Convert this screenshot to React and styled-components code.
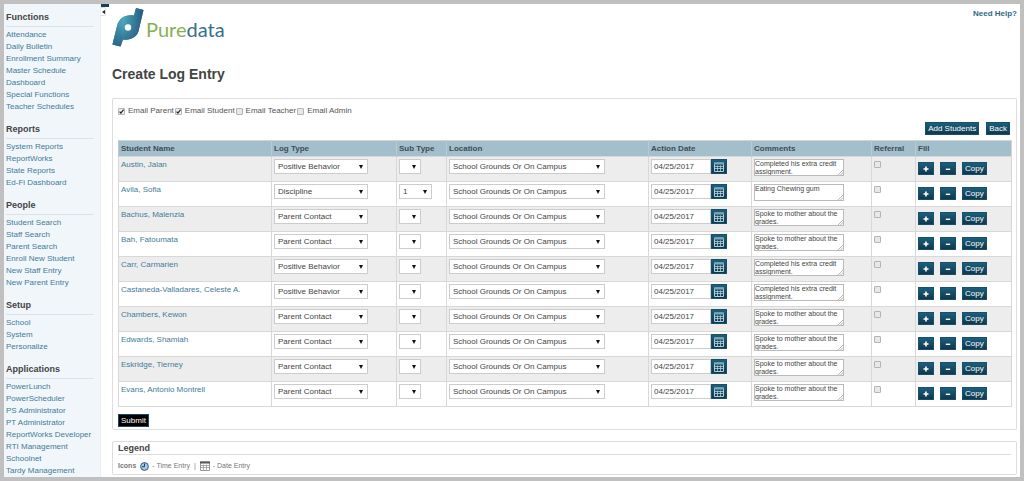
import { useState } from "react";
import styled, { createGlobalStyle } from "styled-components";

const GlobalStyle = createGlobalStyle`
  *, *::before, *::after {
    box-sizing: border-box;
  }

  body {
    margin: 0;
    font-family: "Liberation Sans", Arial, sans-serif;
    font-size: 8px;
    line-height: 12px;
    color: #555;
    background: #c0c0c0;
  }

  button, input, select, textarea {
    margin: 0;
    font-family: inherit;
    font-size: 8px;
    color: #444;
  }
`;

const menu = [
  {
    title: "Functions",
    links: ["Attendance", "Daily Bulletin", "Enrollment Summary", "Master Schedule", "Dashboard", "Special Functions", "Teacher Schedules"],
  },
  {
    title: "Reports",
    links: ["System Reports", "ReportWorks", "State Reports", "Ed-Fi Dashboard"],
  },
  {
    title: "People",
    links: ["Student Search", "Staff Search", "Parent Search", "Enroll New Student", "New Staff Entry", "New Parent Entry"],
  },
  {
    title: "Setup",
    links: ["School", "System", "Personalize"],
  },
  {
    title: "Applications",
    links: ["PowerLunch", "PowerScheduler", "PS Administrator", "PT Administrator", "ReportWorks Developer", "RTI Management", "Schoolnet", "Tardy Management"],
  },
];

const EXTRA_CREDIT = "Completed his extra credit assignment.";
const GRADES = "Spoke to mother about the grades.";

const entries = [
  { name: "Austin, Jalan", type: "Positive Behavior", sub: "", comment: EXTRA_CREDIT },
  { name: "Avila, Sofia", type: "Discipline", sub: "1", comment: "Eating Chewing gum" },
  { name: "Bachus, Malenzia", type: "Parent Contact", sub: "", comment: GRADES },
  { name: "Bah, Fatoumata", type: "Parent Contact", sub: "", comment: GRADES },
  { name: "Carr, Carmarien", type: "Positive Behavior", sub: "", comment: EXTRA_CREDIT },
  { name: "Castaneda-Valladares, Celeste A.", type: "Positive Behavior", sub: "", comment: EXTRA_CREDIT },
  { name: "Chambers, Kewon", type: "Parent Contact", sub: "", comment: GRADES },
  { name: "Edwards, Shamiah", type: "Parent Contact", sub: "", comment: GRADES },
  { name: "Eskridge, Tierney", type: "Parent Contact", sub: "", comment: GRADES },
  { name: "Evans, Antonio Montrell", type: "Parent Contact", sub: "", comment: GRADES },
];

const columns = [
  { label: "Student Name", width: 153 },
  { label: "Log Type", width: 125 },
  { label: "Sub Type", width: 50 },
  { label: "Location", width: 202 },
  { label: "Action Date", width: 103 },
  { label: "Comments", width: 120 },
  { label: "Referral", width: 44 },
  { label: "Fill", width: 96 },
];

const recipients = [
  { label: "Email Parent", checked: true },
  { label: "Email Student", checked: true },
  { label: "Email Teacher", checked: false },
  { label: "Email Admin", checked: false },
];

const Frame = styled.div`
  display: flex;
  min-height: 100vh;
  border: 4px solid #c0c0c0;
  background: #fff;
`;

const Sidebar = styled.nav`
  flex: 0 0 97px;
  padding: 4px 6px 0 2px;
  background: #f1f6fa;
  border-right: 1px solid #e9eef2;
`;

const MenuSection = styled.section`
  & + & {
    margin-top: 7px;
  }
`;

const MenuTitle = styled.h2`
  margin: 0;
  font-size: 9px;
  line-height: 18px;
  color: #444;
  border-bottom: 1px solid #dbe2e8;
`;

const MenuList = styled.ul`
  margin: 0;
  padding: 2px 0 0;
  list-style: none;
`;

const Link = styled.a`
  color: #437b97;
  text-decoration: none;
  white-space: nowrap;
`;

const Collapse = styled.div`
  align-self: flex-start;
  flex: 0 0 8px;
  width: 8px;
  border-top: 3px solid #14425a;
`;

const CollapseButton = styled.button`
  display: flex;
  align-items: center;
  justify-content: center;
  width: 5px;
  height: 9px;
  padding: 0;
  border: 1px solid #ddd;
  border-left: 0;
  border-radius: 0 2px 2px 0;
  background: #fff;
`;

const Main = styled.main`
  flex: 1;
  min-width: 0;
  padding: 4px 3px 2px;
`;

const Header = styled.header`
  display: flex;
  justify-content: space-between;
  align-items: flex-start;
  height: 40px;
`;

const Brand = styled.div`
  display: flex;
  align-items: flex-start;
  gap: 1px;
`;

const BrandName = styled.span`
  font-family: Lato, "Open Sans", sans-serif;
  font-size: 20px;
  line-height: 42px;
  color: #86b052;

  span {
    color: #35708c;
  }
`;

const HelpLink = styled(Link)`
  font-weight: bold;
  color: #2f6885;
`;

const Title = styled.h1`
  margin: 18px 0 15px;
  font-size: 14px;
  line-height: 17px;
  color: #444;
`;

const Panel = styled.section`
  border: 1px solid #ddd;
  border-radius: 2px;
  padding: 0 5px;
`;

const EntryPanel = styled(Panel)`
  padding-bottom: 2px;
`;

const LegendPanel = styled(Panel)`
  margin-top: 11px;
`;

const Recipients = styled.div`
  display: flex;
  gap: 1px;
  padding-top: 6px;
`;

const CheckLabel = styled.label`
  display: flex;
  align-items: center;
  gap: 3px;
`;

const Check = styled.input.attrs({ type: "checkbox" })`
  appearance: none;
  display: block;
  width: 7px;
  height: 7px;
  border: 1px solid #b4b4b4;
  border-radius: 1px;
  background: #e8e8e8;

  &:checked {
    background: #eee url("data:image/svg+xml,%3Csvg xmlns='http://www.w3.org/2000/svg' viewBox='0 0 5 5'%3E%3Cpath d='M.6 2.6l1.3 1.5L4.6.6' fill='none' stroke='%23222' stroke-width='1.2'/%3E%3C/svg%3E");
  }
`;

const Actions = styled.div`
  display: flex;
  justify-content: flex-end;
  gap: 7px;
  padding: 5px 1px 5px 0;
`;

const Button = styled.button`
  display: flex;
  align-items: center;
  justify-content: center;
  width: ${(props) => (props.$square ? "16px" : "auto")};
  height: 13px;
  padding: ${(props) => (props.$square ? "0" : "0 2px")};
  border: 1px solid ${(props) => (props.$dark ? "#1b4a60" : "#17506a")};
  background: ${(props) => (props.$dark ? "#000" : "linear-gradient(#1c5f7c, #10384d)")};
  color: #fff;
  line-height: 11px;
  white-space: nowrap;
`;

const SubmitRow = styled.div`
  display: flex;
  padding-top: 7px;
`;

const Table = styled.table`
  width: 100%;
  table-layout: fixed;
  border-collapse: collapse;
  border: 1px solid #d5d5d5;
`;

const HeadCell = styled.th`
  height: 16px;
  padding: 0 2px;
  text-align: left;
  color: #3f4d55;
  background: #a3bfcc;
  border-left: 1px solid #b7cbd5;
`;

const Row = styled.tr`
  height: 25px;
  background: #fff;

  &:nth-child(odd) {
    background: #ededed;
  }
`;

const Cell = styled.td`
  padding: ${(props) => props.$top || 2}px 2px 0;
  vertical-align: top;
  line-height: 12px;
  border: 1px solid #d8d8d8;
`;

const SelectBox = styled.div`
  display: inline-grid;
  align-items: center;
  vertical-align: top;
  width: ${(props) => props.$width}px;

  > * {
    grid-area: 1 / 1;
  }

  svg {
    justify-self: end;
    margin-right: 5px;
    pointer-events: none;
  }
`;

const Select = styled.select`
  appearance: none;
  width: 100%;
  height: 15px;
  padding: 0 3px;
  border: 1px solid #ccc;
  border-radius: 0;
  background: #fff;
`;

const DateField = styled.div`
  display: flex;
`;

const DateInput = styled.input`
  width: 60px;
  height: 15px;
  padding: 0 2px;
  border: 1px solid #ccc;
`;

const CalendarButton = styled.button`
  display: flex;
  align-items: center;
  justify-content: center;
  width: 16px;
  height: 15px;
  padding: 0;
  border: 1px solid #17506a;
  background: linear-gradient(#1c5f7c, #10384d);
`;

const Comment = styled.textarea`
  display: block;
  width: 90px;
  height: 17px;
  padding: 0;
  border: 1px solid #bbb;
  font-size: 7px;
  line-height: 8px;
  overflow: hidden;
  resize: none;
`;

const CommentBox = styled.div`
  display: inline-grid;
  vertical-align: top;

  > * {
    grid-area: 1 / 1;
  }

  svg {
    place-self: end;
    margin: 1px;
    pointer-events: none;
  }
`;

const FillButtons = styled.div`
  display: flex;
  gap: 6px;
`;

const LegendTitle = styled.h2`
  margin: 0;
  font-size: 9px;
  line-height: 12px;
  color: #444;
  border-bottom: 1px solid #ddd;
`;

const LegendLine = styled.p`
  display: flex;
  align-items: center;
  gap: 3px;
  margin: 0;
  padding: 5px 0 2px;
  font-size: 7px;
  color: #777;

  svg {
    margin-left: 1px;
  }
`;

const LogoMark = () => (
  <svg width="33" height="40" viewBox="0 0 33 40" aria-hidden="true">
    <defs>
      <linearGradient id="mark" x1="0" y1="0" x2="1" y2="0">
        <stop offset="0" stopColor="#3b8ba6" />
        <stop offset=".35" stopColor="#4ba6ba" />
        <stop offset="1" stopColor="#25597b" />
      </linearGradient>
      <linearGradient id="foot" x1="0" y1="0" x2="0" y2="1">
        <stop offset=".4" stopColor="#2a6588" stopOpacity="0" />
        <stop offset="1" stopColor="#2a6588" />
      </linearGradient>
    </defs>
    <path id="pd" d="M24 0l7.500 2-5 21c-1.500 6-8 9.500-15.500 8.500l-2.500 7L.5 36.500 5 18C7 10 13.500 6 22 7.500z" fill="url(#mark)" />
    <use href="#pd" />
    <path d="M24 0l7.500 2-5 21c-1.500 6-8 9.500-15.500 8.500l-2.500 7L.5 36.500 5 18C7 10 13.500 6 22 7.500z" fill="url(#foot)" />
    <circle cx="16" cy="19.500" r="3.200" fill="#fff" />
  </svg>
);

const Arrow = () => (
  <svg width="4" height="4" viewBox="0 0 4 4" aria-hidden="true">
    <path d="M0 0h4L2 4z" fill="#111" />
  </svg>
);

const Calendar = ({ size, color, head }) => (
  <svg width={size} height={size} viewBox="0 0 10 10" fill="none" stroke={color} aria-hidden="true">
    <path d="M.5 1h9v8.500h-9z" />
    <path d="M0 1.500h10" strokeWidth="2" stroke={head} />
    <path d="M1 4.500h8M1 6.500h8M3.500 3.500v6M6.500 3.500v6" strokeWidth=".8" />
  </svg>
);

const Clock = () => (
  <svg width="9" height="9" viewBox="0 0 9 9" aria-hidden="true">
    <circle cx="4.500" cy="4.500" r="3.900" fill="#a4c8ec" stroke="#3a5876" strokeWidth="1" />
    <path d="M4.500 1.500v3.200H2" fill="none" stroke="#26415c" />
  </svg>
);

const Grip = () => (
  <svg width="5" height="5" viewBox="0 0 5 5" stroke="#999" strokeWidth=".7" aria-hidden="true">
    <path d="M0 5l5-5M2.500 5L5 2.500" />
  </svg>
);

const Plus = () => (
  <svg width="6" height="6" viewBox="0 0 6 6" stroke="#fff" strokeWidth="1.600" aria-hidden="true">
    <path d="M3 .5v5M.5 3h5" />
  </svg>
);

const Minus = () => (
  <svg width="6" height="6" viewBox="0 0 6 6" stroke="#fff" strokeWidth="1.400" aria-hidden="true">
    <path d="M.8 3.300h4.400" />
  </svg>
);

const DropDown = ({ label, value, options, width }) => (
  <SelectBox $width={width}>
    <Select aria-label={label} defaultValue={value}>
      {options.map((option) => (
        <option key={option}>{option}</option>
      ))}
    </Select>
    <Arrow />
  </SelectBox>
);

const EntryRow = ({ entry }) => (
  <Row>
    <Cell>
      <Link href="#student">{entry.name}</Link>
    </Cell>
    <Cell>
      <DropDown label="Log Type" value={entry.type} options={["Positive Behavior", "Discipline", "Parent Contact"]} width={94} />
    </Cell>
    <Cell>
      <DropDown label="Sub Type" value={entry.sub} options={entry.sub ? ["", "1"] : [""]} width={entry.sub ? 33 : 22} />
    </Cell>
    <Cell>
      <DropDown label="Location" value="School Grounds Or On Campus" options={["School Grounds Or On Campus"]} width={156} />
    </Cell>
    <Cell>
      <DateField>
        <DateInput aria-label="Action Date" defaultValue="04/25/2017" />
        <CalendarButton type="button" aria-label="Pick a date">
          <Calendar size={10} color="#b4cfda" head="#7fa6b6" />
        </CalendarButton>
      </DateField>
    </Cell>
    <Cell>
      <CommentBox>
        <Comment aria-label="Comments" defaultValue={entry.comment} />
        <Grip />
      </CommentBox>
    </Cell>
    <Cell $top={4}>
      <Check aria-label="Referral" />
    </Cell>
    <Cell $top={5}>
      <FillButtons>
        <Button type="button" $square aria-label="Fill down"><Plus /></Button>
        <Button type="button" $square aria-label="Clear"><Minus /></Button>
        <Button type="button">Copy</Button>
      </FillButtons>
    </Cell>
  </Row>
);

const App = () => {
  const [menuOpen, setMenuOpen] = useState(true);

  return (
    <>
      <GlobalStyle />
      <Frame>
        {menuOpen && (
          <Sidebar>
            {menu.map((section) => (
              <MenuSection key={section.title}>
                <MenuTitle>{section.title}</MenuTitle>
                <MenuList>
                  {section.links.map((link) => (
                    <li key={link}>
                      <Link href="#menu">{link}</Link>
                    </li>
                  ))}
                </MenuList>
              </MenuSection>
            ))}
          </Sidebar>
        )}
        <Collapse>
          <CollapseButton type="button" aria-label="Toggle menu" onClick={() => setMenuOpen(!menuOpen)}>
            <svg width="3" height="4" viewBox="0 0 3 4" aria-hidden="true">
              <path d="M3 0v4L0 2z" fill="#222" />
            </svg>
          </CollapseButton>
        </Collapse>
        <Main>
          <Header>
            <Brand>
              <LogoMark />
              <BrandName>Pure<span>data</span></BrandName>
            </Brand>
            <HelpLink href="#help">Need Help?</HelpLink>
          </Header>
          <Title>Create Log Entry</Title>
          <EntryPanel>
            <Recipients>
              {recipients.map((recipient) => (
                <CheckLabel key={recipient.label}>
                  <Check defaultChecked={recipient.checked} />
                  {recipient.label}
                </CheckLabel>
              ))}
            </Recipients>
            <Actions>
              <Button type="button">Add Students</Button>
              <Button type="button">Back</Button>
            </Actions>
            <Table>
              <colgroup>
                {columns.map((column) => (
                  <col key={column.label} width={column.width} />
                ))}
              </colgroup>
              <thead>
                <tr>
                  {columns.map((column) => (
                    <HeadCell key={column.label}>{column.label}</HeadCell>
                  ))}
                </tr>
              </thead>
              <tbody>
                {entries.map((entry) => (
                  <EntryRow key={entry.name} entry={entry} />
                ))}
              </tbody>
            </Table>
            <SubmitRow>
              <Button type="button" $dark>Submit</Button>
            </SubmitRow>
          </EntryPanel>
          <LegendPanel>
            <LegendTitle>Legend</LegendTitle>
            <LegendLine>
              <b>Icons</b>
              <Clock /> - Time Entry &nbsp;|
              <Calendar size={10} color="#999" head="#555" /> - Date Entry
            </LegendLine>
          </LegendPanel>
        </Main>
      </Frame>
    </>
  );
};

export default App;
